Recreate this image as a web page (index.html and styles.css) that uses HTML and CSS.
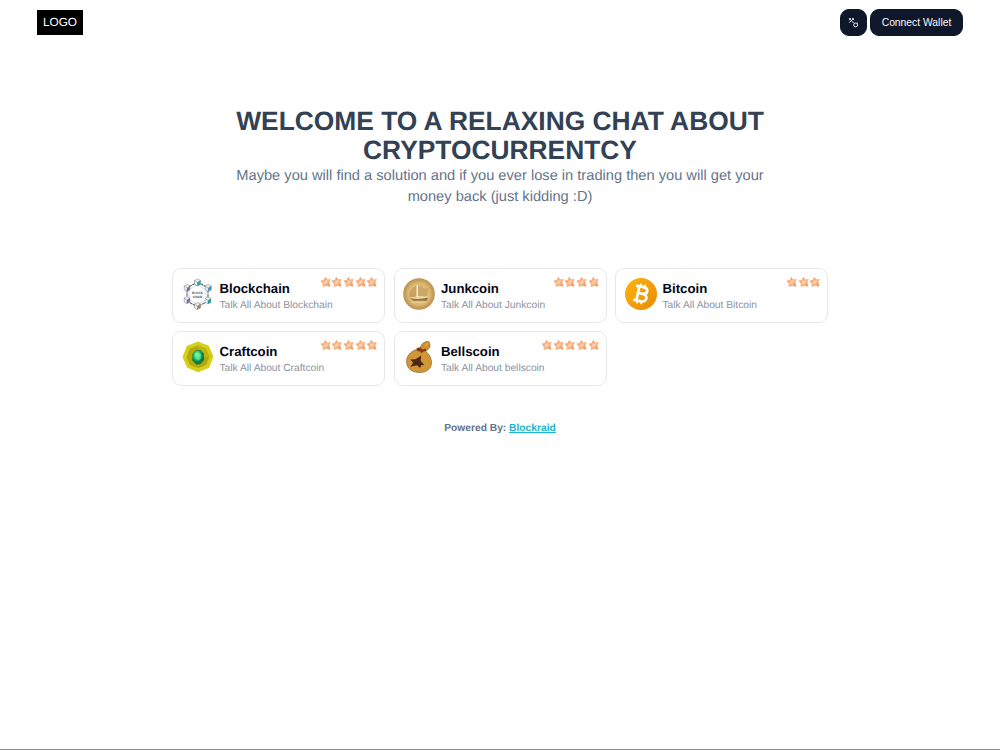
FILE: index.html
```html
<!DOCTYPE html>
<html lang="en">
<head>
<meta charset="utf-8">
<title>Crypto Chat</title>
<link rel="stylesheet" href="styles.css">
</head>
<body>
<svg class="defs" aria-hidden="true">
  <defs>
    <linearGradient id="starFill" x1="0" y1="0" x2="1" y2="1"><stop offset="0" stop-color="#e9743e"/><stop offset=".5" stop-color="#fbc193"/><stop offset="1" stop-color="#f18442"/></linearGradient>
    <radialGradient id="gold"><stop offset="0" stop-color="#f3dfb0"/><stop offset=".7" stop-color="#d9b56f"/><stop offset="1" stop-color="#bb914e"/></radialGradient>
    <linearGradient id="orange" x1="0" y1="0" x2="1" y2="1"><stop offset="0" stop-color="#ffb50a"/><stop offset="1" stop-color="#e88908"/></linearGradient>
    <radialGradient id="gem" cx=".4" cy=".35"><stop offset="0" stop-color="#9bffc4"/><stop offset=".55" stop-color="#2bc873"/><stop offset="1" stop-color="#0b7a3e"/></radialGradient>
    <symbol id="star" viewBox="0 0 12 12"><path d="M5.4 1 7.4 3.5 10.700 3.300 9.400 6.200 10.500 10.500 6.600 9.700 3 10.900 2.900 7.500.9 4.800 4 4.200Z" fill="url(#starFill)" stroke="#f3a673" stroke-width=".4" stroke-linejoin="round"/><path d="m5.800 3.700 1 1.500 1.800.1-1.200 1.400.1 1.600-1.500-.8-1.700.5.4-1.600-1-1.200 1.600-.3Z" fill="#ffdfc4" opacity=".55"/></symbol>
    <symbol id="cube" viewBox="0 0 7 8"><path d="m3.5.4 3 1.7v3.7l-3 1.8-3-1.8V2.1Z" fill="#eef1f5" stroke="#65727d" stroke-width=".5"/><path d="M3.5 4v3.6l3-1.8V2.1Z" fill="currentColor"/><path d="m.5 2.1 3 1.8 3-1.8M3.5 4v3.5" fill="none" stroke="#596873" stroke-width=".4"/></symbol>
  </defs>
</svg>
<header class="topbar">
  <div class="logo">LOGO</div>
  <div class="actions">
    <button class="btn btn-icon" aria-label="Theme"><svg viewBox="0 0 10 10" width="11" height="11" fill="none" stroke="#e4e7ee" stroke-width=".9"><path d="M.9 1 5.3 5.7M5.2 1 1 5.3M1 2.9 2.4 1.1M3.8 1.2 5.5 2.8"/><circle cx="7" cy="7.2" r="1.8"/><path d="m5.3 5.3.6.6M8.4 5.3l.6.5"/></svg></button>
    <button class="btn btn-wallet">Connect Wallet</button>
  </div>
</header>
<main>
  <section class="hero">
    <h1>WELCOME TO A RELAXING CHAT ABOUT<br>CRYPTOCURRENTCY</h1>
    <p>Maybe you will find a solution and if you ever lose in trading then you will get your<br>money back (just kidding :D)</p>
  </section>
  <section class="cards">
    <article class="card">
      <svg class="coin" viewBox="0 0 32 32"><path d="m15.5 4 10.5 6v13l-10.5 6L5 23V10Z" fill="none" stroke="#59676e" stroke-width="1.1" stroke-dasharray="3 .6"/><path d="m15.5 6.5 8.5 5v10l-8.5 5-8.5-5v-10Z" fill="none" stroke="#b5c5c8" stroke-width=".5"/><g color="#28a59a"><use href="#cube" x="12" y=".5" width="7" height="8"/><use href="#cube" x="22.5" y="18.5" width="7" height="8"/></g><g color="#4791bb"><use href="#cube" x="22.5" y="6" width="7.5" height="8"/></g><g color="#906ca5"><use href="#cube" x="1.5" y="6" width="7" height="8"/><use href="#cube" x="1.5" y="18" width="7" height="8"/></g><g color="#b2835a"><use href="#cube" x="12" y="24" width="7" height="8"/></g><text class="coin-label" x="15.5" y="15.5" textLength="11" lengthAdjust="spacingAndGlyphs">BLOCK</text><text class="coin-label" x="15.5" y="19.5" textLength="9.5" lengthAdjust="spacingAndGlyphs">CHAIN</text></svg>
      <div class="info"><h2>Blockchain</h2><p>Talk All About Blockchain</p></div>
      <div class="stars"><svg><use href="#star"/></svg><svg><use href="#star"/></svg><svg><use href="#star"/></svg><svg><use href="#star"/></svg><svg><use href="#star"/></svg></div>
    </article>
    <article class="card">
      <svg class="coin" viewBox="0 0 32 32"><circle cx="16" cy="16" r="15.8" fill="url(#gold)"/><circle cx="16" cy="16" r="14" fill="none" stroke="#c39a5a" stroke-width=".7"/><path d="M13.7 7.5C8 10 6 14 6.1 19.2l7.7-.8Z" fill="#c9a262"/><path d="M15 6.5V18h9l1.3-8c-3 1-6 .5-7.2-3-1 2-1.5 2-3.1-.5Z" fill="#cda565"/><path d="M14.3 7v12" stroke="#fdeecb" stroke-width="1.5"/><path d="M7 20c6 1.5 12 1 18-.5l-1.4 3.2H10.3Z" fill="#94703f"/><path d="M7.5 19.5c6 1.2 12 .8 17.5-.5" fill="none" stroke="#f5e0b2" stroke-width=".6"/><path d="M8 24.5c5 .8 10-.8 15.5.3" fill="none" stroke="#e9cd91"/></svg>
      <div class="info"><h2>Junkcoin</h2><p>Talk All About Junkcoin</p></div>
      <div class="stars"><svg><use href="#star"/></svg><svg><use href="#star"/></svg><svg><use href="#star"/></svg><svg><use href="#star"/></svg></div>
    </article>
    <article class="card">
      <svg class="coin" viewBox="0 0 32 32"><circle cx="16" cy="16" r="16" fill="url(#orange)"/><g transform="rotate(12 16 16)" fill="none" stroke="#fff" stroke-width="2.7"><path d="M9.5 8.8H17c6 0 6 6.7 0 6.7h-4M9.5 23.2h8c6.2 0 6.2-7.7 0-7.7M12.8 8.5v15"/><path d="M14 6v3M18.2 6v3M14 23v3M18.2 23v3" stroke-width="1.8"/></g></svg>
      <div class="info"><h2>Bitcoin</h2><p>Talk All About Bitcoin</p></div>
      <div class="stars"><svg><use href="#star"/></svg><svg><use href="#star"/></svg><svg><use href="#star"/></svg></div>
    </article>
    <article class="card">
      <svg class="coin" viewBox="0 0 32 32"><path d="m16 .5 10.8 4.3 4.7 10.700-4.300 11.300L16 31.200 5 26.600.5 16 4.700 4.900Z" fill="#d4cf18"/><path d="m16 4.500 8 3.200 3.500 8.100-3.300 8.300L16 27.300 7.800 24 4.500 16l3.200-8.200Z" fill="#b5a80e"/><path d="m16 4.500 8 3.200 3.500 8.100-11.500.2Z" fill="#c2b311"/><path d="m13.500 9.700 4.700-.6 3.300 3.200.3 7-3.600 3.800-4 .2-3.600-3.900v-6Z" fill="url(#gem)" stroke="#0a7a3c" stroke-width=".5"/><path d="m14 12 3-.5 2 2-.2 4-2.300 2-3-2V13Z" fill="#6df0a6" opacity=".6"/></svg>
      <div class="info"><h2>Craftcoin</h2><p>Talk All About Craftcoin</p></div>
      <div class="stars"><svg><use href="#star"/></svg><svg><use href="#star"/></svg><svg><use href="#star"/></svg><svg><use href="#star"/></svg><svg><use href="#star"/></svg></div>
    </article>
    <article class="card">
      <svg class="coin" viewBox="0 0 32 32"><path d="M17.5 8.5C17 3.7 20.8.2 25.5.5c2.8 3 1.7 8-3.2 9.300Z" fill="#cf902f" stroke="#805520" stroke-width=".6"/><path d="M17 8C10 8.500 3.600 13 3.600 20.500c0 7 5.400 11 12.900 11s12.300-4 12-10.400c-.2-5-3.400-9.600-7.600-12Z" fill="#d19736" stroke="#8a6428" stroke-width=".7"/><path d="m13.600 7 3.700-.8 2 2.500 3.200-1.100.9 2.400-3.600.8-1.500 1.600-.7-2-3.400-.3Z" fill="#823817"/><path d="m22.500 5 2-3" stroke="#efbf60" stroke-width="1"/><path d="m18.300 14.500-.7 5.300 3.500 4-3.100.8-.8 2.400-3.200-2.700-6.500 1.400 2.700-4.300-3-3 5.300-.1Z" fill="#4e2815"/></svg>
      <div class="info"><h2>Bellscoin</h2><p>Talk All About bellscoin</p></div>
      <div class="stars"><svg><use href="#star"/></svg><svg><use href="#star"/></svg><svg><use href="#star"/></svg><svg><use href="#star"/></svg><svg><use href="#star"/></svg></div>
    </article>
  </section>
</main>
<footer>Powered By: <a href="#">Blockraid</a></footer>
</body>
</html>
```
FILE: styles.css
```css
* { box-sizing: border-box; }
body { margin: 0; height: 750px; border-bottom: 1px solid #929292; background: #fff; font-family: "Liberation Sans", Arial, sans-serif; color: #020617; overflow: hidden; text-rendering: geometricPrecision; }
h1, h2, p { margin: 0; }
.defs { position: absolute; width: 0; height: 0; }
.topbar { display: flex; justify-content: space-between; align-items: center; height: 44px; padding: 0 37px; }
.logo { display: flex; align-items: center; justify-content: center; width: 46px; height: 25px; background: #000; color: #fff; font-size: 11.8px; }
.actions { display: flex; gap: 3px; }
.btn { display: flex; align-items: center; justify-content: center; height: 27px; padding: 0; border: 1px solid #0f172a; border-radius: 9px; background: #0f172a; color: #f8fafc; font-family: inherit; font-size: 10.33px; }
.btn-icon { width: 27px; }
.btn-wallet { width: 93px; }
.hero { padding-top: 63px; text-align: center; white-space: nowrap; }
.hero h1 { color: #334155; font-size: 26.37px; line-height: 29px; font-weight: 700; }
.hero p { padding-top: 1px; color: #64748b; font-size: 14.65px; line-height: 20.7px; }
.cards { display: grid; grid-template-columns: repeat(3, 213px); gap: 8.5px; width: 656px; margin: 60.6px auto 0; }
.card { position: relative; display: flex; align-items: center; gap: 6px; height: 54.5px; padding: 0 8.5px; border: 1px solid #e6e8ec; border-radius: 9px; }
.coin { flex: none; width: 32px; height: 32px; margin-top: -3px; }
.coin-label { font-size: 3.2px; font-weight: 700; text-anchor: middle; fill: #344b55; }
.info { white-space: nowrap; padding-top: 2px; }
.info h2 { font-size: 13.2px; line-height: 19px; }
.info p { color: #8d94a3; font-size: 10.24px; line-height: 16px; }
.stars { position: absolute; top: 7px; right: 6px; display: flex; }
.stars svg { width: 11.7px; height: 12px; }
footer { margin-top: 36px; text-align: center; color: #64748b; font-size: 10.24px; line-height: 14px; font-weight: 700; }
footer a { color: #16b5cb; }
```
